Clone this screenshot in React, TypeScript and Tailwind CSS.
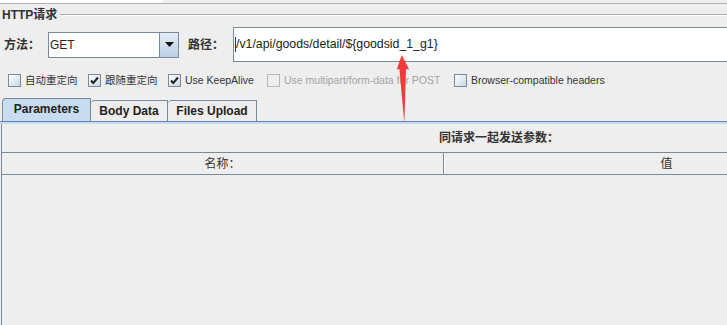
import React from 'react';

// Swing Metal style checkbox
function CheckBox({ checked = false, disabled = false }: { checked?: boolean; disabled?: boolean }) {
  if (disabled) {
    return <div className="w-[13px] h-[13px] shrink-0 border border-[#b8b8b8] bg-[#eeeeee]" />;
  }
  return (
    <div className="w-[13px] h-[13px] shrink-0 border border-[#7a8a99] bg-gradient-to-br from-[#ffffff] to-[#c9d7e6] flex items-center justify-center">
      {checked && (
        <svg width="11" height="11" viewBox="0 0 11 11">
          <path d="M2 5.5 L4.3 8 L9 2.5" fill="none" stroke="#222" strokeWidth="2" />
        </svg>
      )}
    </div>
  );
}

function Option({ label, checked, disabled, width }: { label: string; checked?: boolean; disabled?: boolean; width?: string }) {
  return (
    <div className={`flex items-center gap-[4px] ${width ?? ''}`}>
      <CheckBox checked={checked} disabled={disabled} />
      <span className={`text-[10.5px] whitespace-nowrap ${disabled ? 'text-[#a3a3a3]' : 'text-[#333333]'}`}>{label}</span>
    </div>
  );
}

export default function App() {
  return (
    <div className="relative w-[727px] h-[325px] overflow-hidden bg-[#eeeeee] text-[#333333] font-['Liberation_Sans','Noto_Sans_CJK_SC',sans-serif]">
      {/* top strip */}
      <div className="flex h-[3px]">
        <div className="w-[163px] bg-white" />
      </div>
      <div className="h-px bg-[#b0b0b0]" />

      {/* titled border */}
      <div className="flex items-center h-[22px] pl-[2px]">
        <span className="text-[12px] font-bold leading-none">HTTP请求</span>
        <div className="ml-[3px] flex-1 border-t border-[#a8a8a8] border-b-white border-b h-[2px]" />
      </div>

      {/* method + path */}
      <div className="flex items-center h-[37px]">
        <span className="ml-[4px] text-[12px] font-bold w-[36px] whitespace-nowrap">方法：</span>
        <div className="ml-[8px] w-[131px] h-[26px] border border-[#7a8a99] bg-white flex">
          <div className="flex-1 flex items-center pl-[1px] text-[12px] text-[#222]">GET</div>
          <div className="w-[19px] border-l border-[#7a8a99] bg-gradient-to-b from-[#e6eef6] to-[#b9cfe4] flex items-center justify-center">
            <svg width="9" height="5" viewBox="0 0 9 5">
              <path d="M0 0 H9 L4.5 5 Z" fill="#111" />
            </svg>
          </div>
        </div>
        <span className="ml-[9px] text-[12px] font-bold w-[36px] whitespace-nowrap">路径：</span>
        <div className="ml-[9px] flex-1 h-[35px] border border-r-0 border-[#7a8a99] bg-white flex items-center">
          <div className="w-px h-[15px] bg-[#333] ml-[1px]" />
          <span className="text-[12.3px] text-[#222] whitespace-nowrap">/v1/api/goods/detail/${'{'}goodsid_1_g1{'}'}</span>
        </div>
      </div>

      {/* options */}
      <div className="flex items-center h-[35px] pl-[8px]">
        <Option label="自动重定向" width="w-[80px]" />
        <Option label="跟随重定向" checked width="w-[80px]" />
        <Option label="Use KeepAlive" checked width="w-[99px]" />
        <Option label="Use multipart/form-data for POST" disabled width="w-[187px]" />
        <Option label="Browser-compatible headers" />
      </div>

      {/* tabs */}
      <div className="flex items-end h-[23px] pl-[2px]">
        <div className="w-[89px] h-[23px] pb-[2px] border border-b-0 border-[#7a8a99] rounded-tl-[4px] bg-[#c8dcf0] flex items-center justify-center text-[12px] font-bold text-[#222]">
          Parameters
        </div>
        <div className="w-[77px] h-[21px] border-t border-r border-[#7a8a99] rounded-tl-[4px] flex items-center justify-center text-[12px] font-bold text-[#222]">
          Body Data
        </div>
        <div className="w-[89px] h-[21px] border-t border-r border-[#7a8a99] rounded-tl-[4px] flex items-center justify-center text-[12px] font-bold text-[#222]">
          Files Upload
        </div>
      </div>
      <div className="h-px bg-[#6382bf]" />
      <div className="h-[2px] bg-[#c8dcf0]" />

      {/* panel */}
      <div className="ml-[1px] border-l border-[#7a8a99] h-[210px] flex flex-col">
        <div className="h-[28px] flex items-center pl-[437px] text-[12px] font-bold whitespace-nowrap">同请求一起发送参数：</div>
        <div className="flex h-[23px] border-t border-b border-[#7a8a99] w-[886px]">
          <div className="w-[441px] flex items-center justify-center text-[12px]">名称：</div>
          <div className="w-px bg-[#7a8a99]" />
          <div className="w-px bg-white" />
          <div className="w-[443px] flex items-center justify-center text-[12px]">值</div>
        </div>
      </div>

      {/* annotation arrow */}
      <svg className="absolute left-[390px] top-[50px]" width="25" height="80" viewBox="0 0 25 80">
        <polygon points="11.7,5 6.8,19.5 9.4,19 14.3,73 16,19 19.2,19.5" fill="#f33a3a" />
      </svg>
    </div>
  );
}
